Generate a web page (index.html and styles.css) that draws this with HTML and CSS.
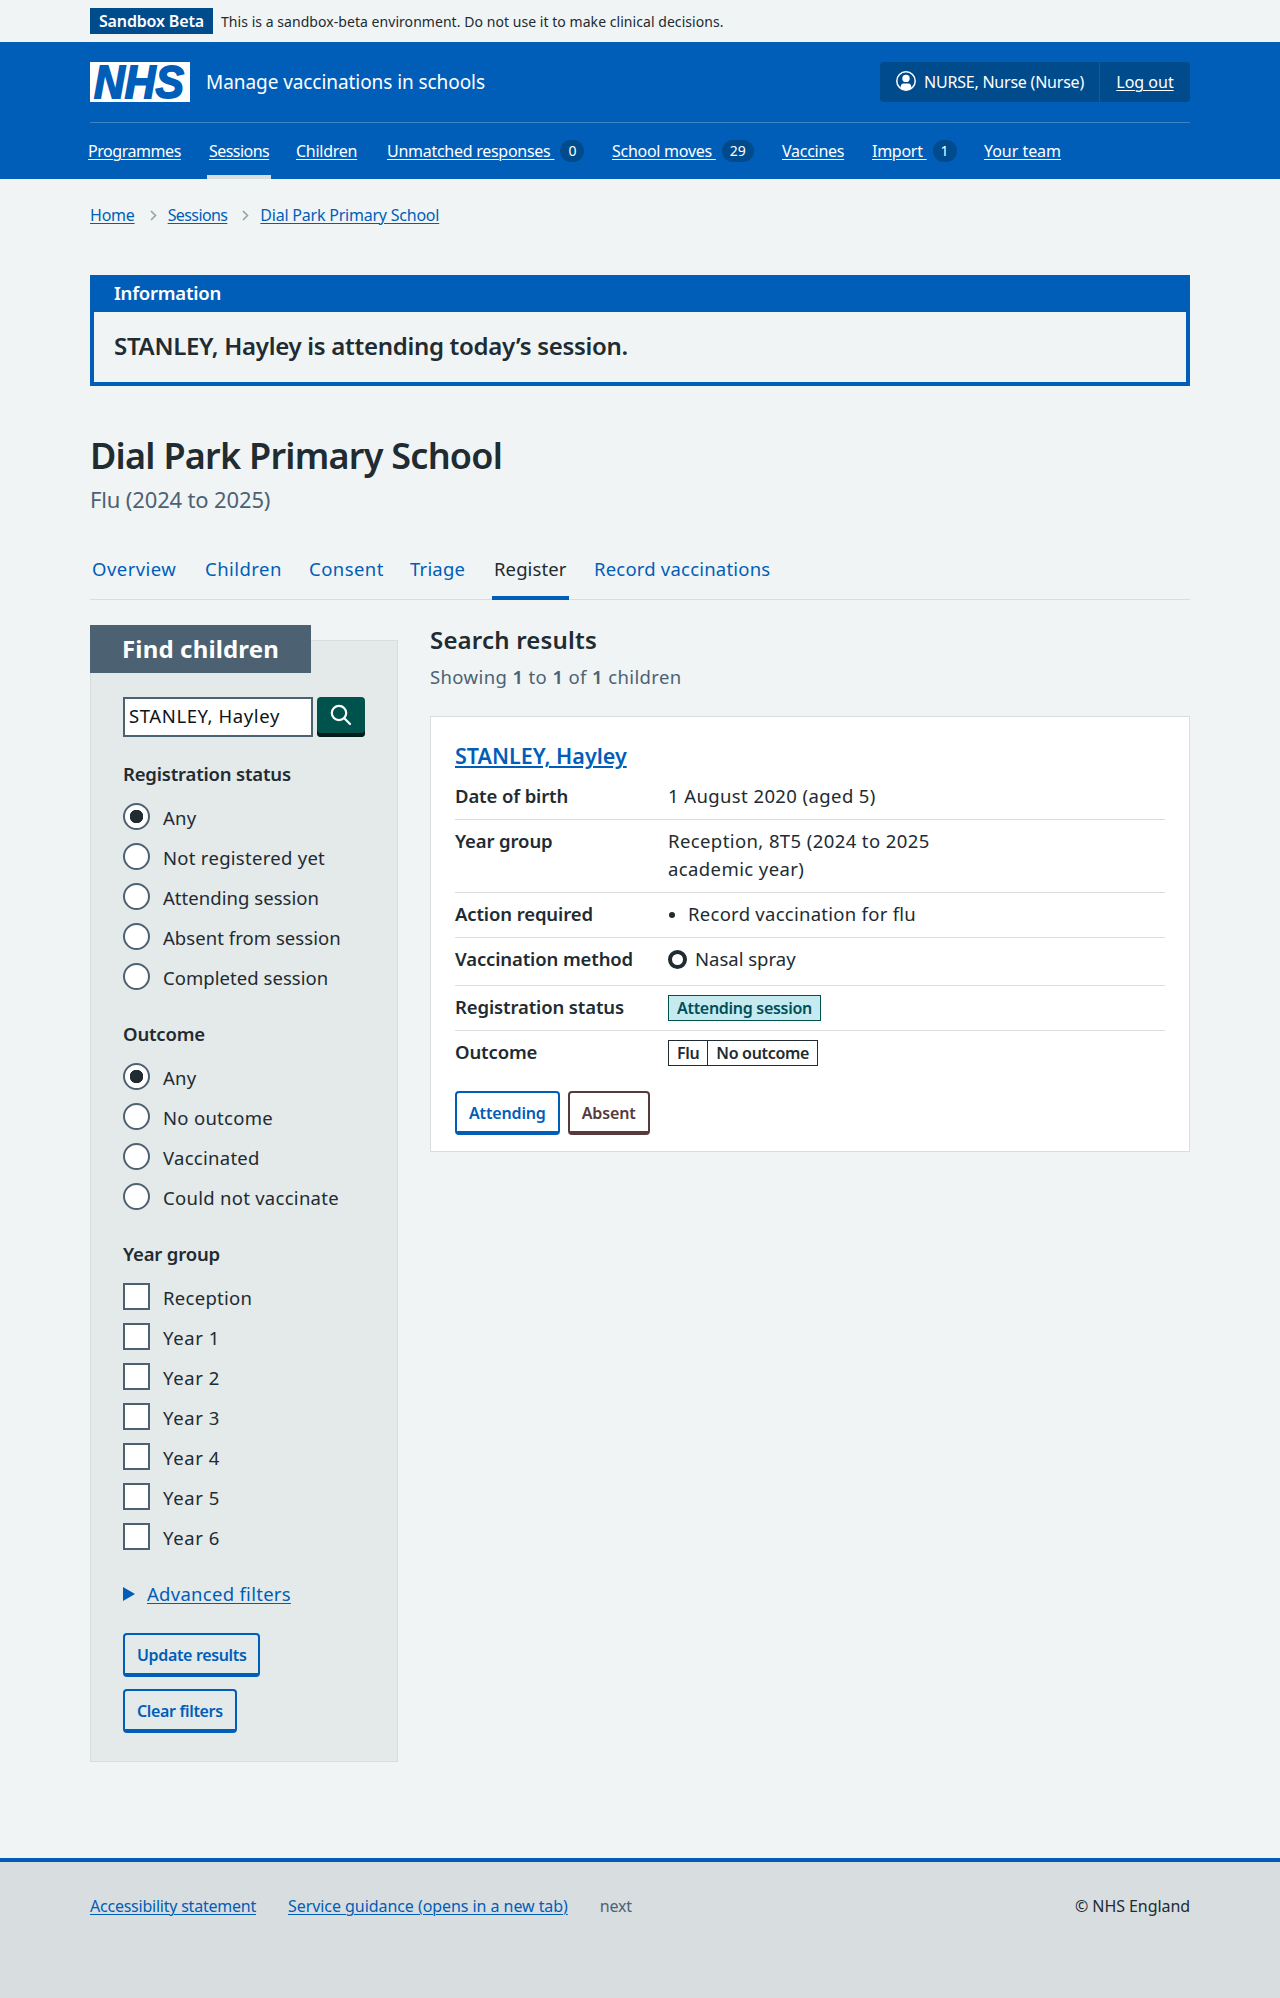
FILE: index.html
```html
<!DOCTYPE html>
<html lang="en">
<head>
<meta charset="utf-8">
<title>Dial Park Primary School – Manage vaccinations in schools</title>
<link rel="stylesheet" href="styles.css">
</head>
<body>
<div class="environment">
  <strong class="environment-tag">Sandbox Beta</strong>
  <span>This is a sandbox-beta environment. Do not use it to make clinical decisions.</span>
</div>

<header class="header">
  <div class="header-top">
    <svg class="logo" viewBox="0 0 100 40" role="img" aria-label="NHS">
      <rect width="100" height="40" fill="#fff"/>
      <text x="4" y="36" textLength="90" lengthAdjust="spacingAndGlyphs">NHS</text>
    </svg>
    <span class="service-name">Manage vaccinations in schools</span>
    <div class="account">
      <span class="account-user">
        <svg width="20" height="20" viewBox="0 0 20 20" aria-hidden="true">
          <circle cx="10" cy="10" r="9.2" fill="none" stroke="#fff" stroke-width="1.5"/>
          <circle cx="10" cy="7.4" r="3.7" fill="#fff"/>
          <path d="M4.6 17.400c-.3-3.400 1.200-5 3-5h4.800c1.800 0 3.300 1.600 3 5-3 2.400-7.800 2.400-10.800 0z" fill="#fff"/>
        </svg>
        <span>NURSE, Nurse (Nurse)</span>
      </span>
      <span class="account-logout"><a href="#">Log out</a></span>
    </div>
  </div>
  <nav class="nav">
    <span class="nav-item nav-tight"><a href="#">Programmes</a></span>
    <span class="nav-item nav-tight current"><a href="#">Sessions</a></span>
    <span class="nav-item"><a href="#">Children</a></span>
    <span class="nav-item"><a href="#">Unmatched responses&nbsp;</a><span class="badge">0</span></span>
    <span class="nav-item"><a href="#">School moves&nbsp;</a><span class="badge">29</span></span>
    <span class="nav-item"><a href="#">Vaccines</a></span>
    <span class="nav-item"><a href="#">Import&nbsp;</a><span class="badge">1</span></span>
    <span class="nav-item nav-loose"><a href="#">Your team</a></span>
  </nav>
</header>

<div class="container">
  <nav class="breadcrumb">
    <a href="#">Home</a>
    <svg width="7" height="11" viewBox="0 0 7 11" aria-hidden="true"><path d="M1 1l4.500 4.500L1 10"/></svg>
    <a href="#" class="crumb-tight">Sessions</a>
    <svg width="7" height="11" viewBox="0 0 7 11" aria-hidden="true"><path d="M1 1l4.500 4.500L1 10"/></svg>
    <a href="#">Dial Park Primary School</a>
  </nav>

  <section class="banner">
    <h2 class="banner-title">Information</h2>
    <p class="banner-text">STANLEY, Hayley is attending today’s session.</p>
  </section>

  <h1 class="page-title">Dial Park Primary School</h1>
  <p class="caption">Flu (2024 to 2025)</p>

  <nav class="tabs">
    <a href="#" class="wide">Overview</a>
    <a href="#" class="wide">Children</a>
    <a href="#" class="wide">Consent</a>
    <a href="#">Triage</a>
    <a href="#" class="selected">Register</a>
    <a href="#">Record vaccinations</a>
  </nav>

  <div class="columns">
    <aside class="filters">
      <h2 class="filters-title">Find children</h2>
      <form class="filters-body">
        <div class="search">
          <input class="search-input" type="text" value="STANLEY, Hayley" aria-label="Search">
          <button class="search-button" type="button" aria-label="Search">
            <svg width="22" height="22" viewBox="0 0 22 22" aria-hidden="true"><circle cx="9" cy="9" r="7.2"/><path d="M14.3 14.3L20 20"/></svg>
          </button>
        </div>
        <div class="group">
          <h3 class="legend">Registration status</h3>
          <label class="option"><span class="radio checked"></span>Any</label>
          <label class="option"><span class="radio"></span>Not registered yet</label>
          <label class="option tight"><span class="radio"></span>Attending session</label>
          <label class="option tight"><span class="radio"></span>Absent from session</label>
          <label class="option tight"><span class="radio"></span>Completed session</label>
        </div>
        <div class="group">
          <h3 class="legend">Outcome</h3>
          <label class="option"><span class="radio checked"></span>Any</label>
          <label class="option"><span class="radio"></span>No outcome</label>
          <label class="option"><span class="radio"></span>Vaccinated</label>
          <label class="option"><span class="radio"></span>Could not vaccinate</label>
        </div>
        <div class="group">
          <h3 class="legend">Year group</h3>
          <label class="option"><span class="checkbox"></span>Reception</label>
          <label class="option wide"><span class="checkbox"></span>Year 1</label>
          <label class="option wide"><span class="checkbox"></span>Year 2</label>
          <label class="option wide"><span class="checkbox"></span>Year 3</label>
          <label class="option wide"><span class="checkbox"></span>Year 4</label>
          <label class="option wide"><span class="checkbox"></span>Year 5</label>
          <label class="option wide"><span class="checkbox"></span>Year 6</label>
        </div>
        <div class="advanced"><span class="arrow"></span><a href="#">Advanced filters</a></div>
        <div class="filter-actions">
          <button class="button" type="button">Update results</button>
          <button class="button" type="button">Clear filters</button>
        </div>
      </form>
    </aside>

    <main class="results">
      <h2 class="results-title">Search results</h2>
      <p class="results-count">Showing <b>1</b> to <b>1</b> of <b>1</b> children</p>
      <article class="card">
        <h3 class="card-title"><a href="#">STANLEY, Hayley</a></h3>
        <dl class="summary">
          <div class="row"><dt>Date of birth</dt><dd>1 August 2020 (aged 5)</dd></div>
          <div class="row"><dt>Year group</dt><dd>Reception, 8T5 (2024 to 2025 academic year)</dd></div>
          <div class="row"><dt>Action required</dt><dd><ul><li>Record vaccination for flu</li></ul></dd></div>
          <div class="row method"><dt>Vaccination method</dt><dd><span class="ring"></span>Nasal spray</dd></div>
          <div class="row"><dt>Registration status</dt><dd><strong class="tag attending">Attending session</strong></dd></div>
          <div class="row"><dt>Outcome</dt><dd><strong class="tag split"><span>Flu</span><span>No outcome</span></strong></dd></div>
        </dl>
        <div class="card-actions">
          <button class="button" type="button">Attending</button>
          <button class="button absent" type="button">Absent</button>
        </div>
      </article>
    </main>
  </div>
</div>

<footer class="footer">
  <div class="footer-inner">
    <a href="#">Accessibility statement</a>
    <a href="#" class="guidance">Service guidance (opens in a new tab)</a>
    <span class="release">next</span>
    <span class="copyright">© NHS England</span>
  </div>
</footer>
</body>
</html>
```
FILE: styles.css
```css
* { box-sizing: border-box; }
body {
  margin: 0;
  background: #f0f4f5;
  color: #212b32;
  font-family: "Noto Sans", "Open Sans", sans-serif;
  font-size: 18.5px;
  line-height: 28px;
  letter-spacing: .28px;
}
h1, h2, h3, p, dl, dd, ul { margin: 0; padding: 0; }
h1, h2, h3, dt, strong, b { font-weight: 600; }
a { color: #005eb8; text-decoration-thickness: 1px; text-underline-offset: 2px; }

.environment {
  height: 42px;
  padding: 0 90px;
  display: flex;
  align-items: center;
  gap: 8px;
  font-size: 14px;
  line-height: 29px;
  letter-spacing: .05px;
}
.environment-tag {
  width: 123px;
  line-height: 26px;
  text-align: center;
  background: #004b8c;
  color: #fff;
  font-size: 16px;
  letter-spacing: -.15px;
}

.header { background: #005eb8; color: #fff; padding: 0 90px; height: 137px; }
.header a { color: #fff; }
.header-top {
  height: 81px;
  padding: 20px 0;
  display: flex;
  border-bottom: 1px solid #3f83c7;
}
.logo { width: 100px; height: 40px; overflow: visible; }
.logo text {
  font: italic 700 45.5px "Liberation Sans", Arial, sans-serif;
  letter-spacing: 0;
  fill: #005eb8;
  stroke: #005eb8;
  stroke-width: 1.8px;
}
.service-name {
  margin-left: 16px;
  font-size: 19px;
  line-height: 40px;
  letter-spacing: -.07px;
}
.account {
  margin-left: auto;
  display: flex;
  background: #004b8c;
  border-radius: 4px;
  font-size: 16px;
  line-height: 40px;
  letter-spacing: -.22px;
}
.account-user {
  width: 220px;
  display: flex;
  align-items: center;
  gap: 8px;
  padding-left: 16px;
  border-right: 1px solid #005eb8;
}
.account-user svg { margin-top: -2px; }
.account-logout { width: 90px; text-align: center; letter-spacing: 0; }
.nav {
  margin-left: -2px;
  display: grid;
  grid-template-columns: 121px 87px 91px 225px 170px 90px 112px auto;
  font-size: 16px;
  letter-spacing: -.27px;
}
.nav-item {
  height: 56px;
  display: flex;
  align-items: center;
  justify-self: start;
  white-space: nowrap;
}
.nav-tight { letter-spacing: -.45px; }
.nav-loose { letter-spacing: -.04px; }
.nav-item.current { box-shadow: inset 0 -4px #d8dde0; margin: 0 -2px; padding: 0 2px; letter-spacing: -.55px; }
.badge {
  min-width: 24px;
  margin-left: 6px;
  padding: 0 8px;
  border-radius: 11px;
  background: #004b8c;
  font-size: 14px;
  line-height: 22px;
  text-align: center;
  letter-spacing: 0;
}

.container { padding: 0 90px; }
.breadcrumb {
  height: 96px;
  padding-top: 24px;
  display: flex;
  align-items: flex-start;
  font-size: 16px;
  line-height: 24px;
  letter-spacing: -.22px;
}
.breadcrumb svg {
  margin: 7px 11px 0 15px;
  fill: none;
  stroke: #96a1a8;
  stroke-width: 1.6px;
}
.breadcrumb .crumb-tight { letter-spacing: -.6px; }

.banner { height: 111px; border: 4px solid #005eb8; border-top: 0; }
.banner-title {
  height: 37px;
  padding-left: 20px;
  background: #005eb8;
  color: #fff;
  font-size: 18.5px;
  line-height: 35px;
  letter-spacing: -.23px;
}
.banner-text {
  padding: 16px 20px 0;
  font-size: 24px;
  font-weight: 600;
  line-height: 36px;
  letter-spacing: -.29px;
}
.page-title {
  margin-top: 46px;
  font-size: 36px;
  line-height: 48px;
  letter-spacing: -.75px;
}
.caption {
  margin-top: 3px;
  color: #4c6272;
  font-size: 22px;
  line-height: 32px;
  letter-spacing: -.15px;
}
.tabs {
  margin-top: 25px;
  height: 60px;
  border-bottom: 1px solid #d8dde0;
  display: grid;
  grid-template-columns: 113px 104px 101px 84px 100px auto;
}
.tabs a {
  height: 60px;
  padding: 0 2px;
  justify-self: start;
  line-height: 57px;
  text-decoration: none;
  letter-spacing: .2px;
}
.tabs .wide { letter-spacing: .45px; }
.tabs .selected { color: #212b32; box-shadow: inset 0 -4px #005eb8; letter-spacing: .1px; }

.columns {
  margin-top: 25px;
  display: grid;
  grid-template-columns: 308px 760px;
  gap: 32px;
  align-items: start;
}
.filters {
  margin-top: 15px;
  height: 1122px;
  background: #e4e9e9;
  border: 1px solid #d8dde0;
}
.filters-title {
  width: 221px;
  margin: -16px 0 0 -1px;
  padding-left: 32px;
  background: #4c6272;
  color: #fff;
  font-size: 24px;
  font-weight: 700;
  line-height: 48px;
  letter-spacing: .15px;
}
.filters-body { padding: 24px 32px 0; }
.search { display: flex; gap: 4px; }
.search-input {
  width: 190px;
  height: 40px;
  padding: 0 4px 3px;
  border: 2px solid #4c6272;
  border-radius: 0;
  background: #fff;
  color: #0b1419;
  font: inherit;
  letter-spacing: .6px;
}
.search-button {
  width: 48px;
  height: 40px;
  padding: 0 0 5px 13px;
  border: 0;
  border-radius: 4px;
  background: #00534c;
  box-shadow: inset 0 -4px #001c1a;
}
.search-button svg {
  display: block;
  fill: none;
  stroke: #fff;
  stroke-width: 2.2px;
  stroke-linecap: round;
}
.group { margin-top: 23px; }
.legend {
  margin-bottom: 9px;
  font-size: 18.5px;
  line-height: 28px;
  letter-spacing: -.18px;
}
.option {
  height: 40px;
  display: flex;
  align-items: flex-start;
  gap: 13px;
  line-height: 41px;
}
.option.tight { letter-spacing: .05px; }
.option.wide { letter-spacing: .6px; }
.radio, .checkbox {
  flex: none;
  width: 27px;
  height: 27px;
  margin-top: 6px;
  border: 2px solid #4c6272;
  background: #fff;
}
.radio { border-radius: 50%; }
.radio.checked { background: radial-gradient(circle, #212b32 6.5px, #fff 7px); }
.advanced { margin-top: 23px; display: flex; align-items: center; gap: 12px; }
.arrow {
  border-left: 12px solid #005eb8;
  border-top: 7px solid transparent;
  border-bottom: 7px solid transparent;
}
.filter-actions { margin-top: 25px; display: flex; flex-direction: column; align-items: flex-start; gap: 12px; }
.button {
  height: 44px;
  padding: 1px 12px 0;
  border: 2px solid #005eb8;
  border-bottom-width: 4px;
  border-radius: 4px;
  background: transparent;
  color: #005eb8;
  font: 600 16px/36px "Noto Sans", sans-serif;
  letter-spacing: -.35px;
}
.button.absent { border-color: #583a3c; color: #583a3c; }

.results-title { font-size: 24px; line-height: 30px; letter-spacing: .19px; }
.results-count { margin-top: 8px; color: #4c6272; letter-spacing: .38px; }
.card {
  margin-top: 25px;
  height: 436px;
  padding: 23px 24px 0;
  background: #fff;
  border: 1px solid #d8dde0;
}
.card-title { font-size: 21.5px; line-height: 32px; letter-spacing: 0; }
.card-title a { text-decoration-thickness: 2px; }
.summary { margin-top: 3px; }
.row {
  display: grid;
  grid-template-columns: 213px 290px;
  padding: 7px 0 9px;
  border-bottom: 1px solid #d8dde0;
}
.row:last-child { border-bottom: 0; }
.row dt { letter-spacing: -.12px; }
.row dd { letter-spacing: .4px; }
.row li { margin-left: 20px; letter-spacing: .27px; }
.row li::marker { font-size: 17px; }
.row.method { padding-bottom: 12px; }
.method dd { display: flex; align-items: center; gap: 8px; letter-spacing: 0; }
.ring { width: 19px; height: 19px; border: 4.5px solid #212b32; border-radius: 50%; }
.row .tag {
  display: inline-flex;
  height: 26px;
  margin-top: 2px;
  vertical-align: top;
  border: 1px solid #212b32;
  font-size: 16px;
  line-height: 24px;
  letter-spacing: -.29px;
}
.tag.attending { padding: 0 8px; border-color: #00534f; background: #c5eaf0; color: #004e58; }
.tag.split { letter-spacing: -.33px; }
.tag.split span { padding: 0 8px; }
.tag.split span + span { border-left: 1px solid #212b32; }
.card-actions { margin-top: 16px; display: flex; gap: 8px; }
.card-actions .button { letter-spacing: -.15px; }

.footer {
  height: 140px;
  margin-top: 96px;
  padding: 32px 90px 0;
  background: #d8dde0;
  border-top: 4px solid #005eb8;
}
.footer-inner {
  display: flex;
  gap: 32px;
  font-size: 16px;
  line-height: 24px;
  letter-spacing: -.23px;
}
.guidance { letter-spacing: -.06px; }
.release { color: #4c6272; }
.copyright { margin-left: auto; letter-spacing: -.07px; }
```
